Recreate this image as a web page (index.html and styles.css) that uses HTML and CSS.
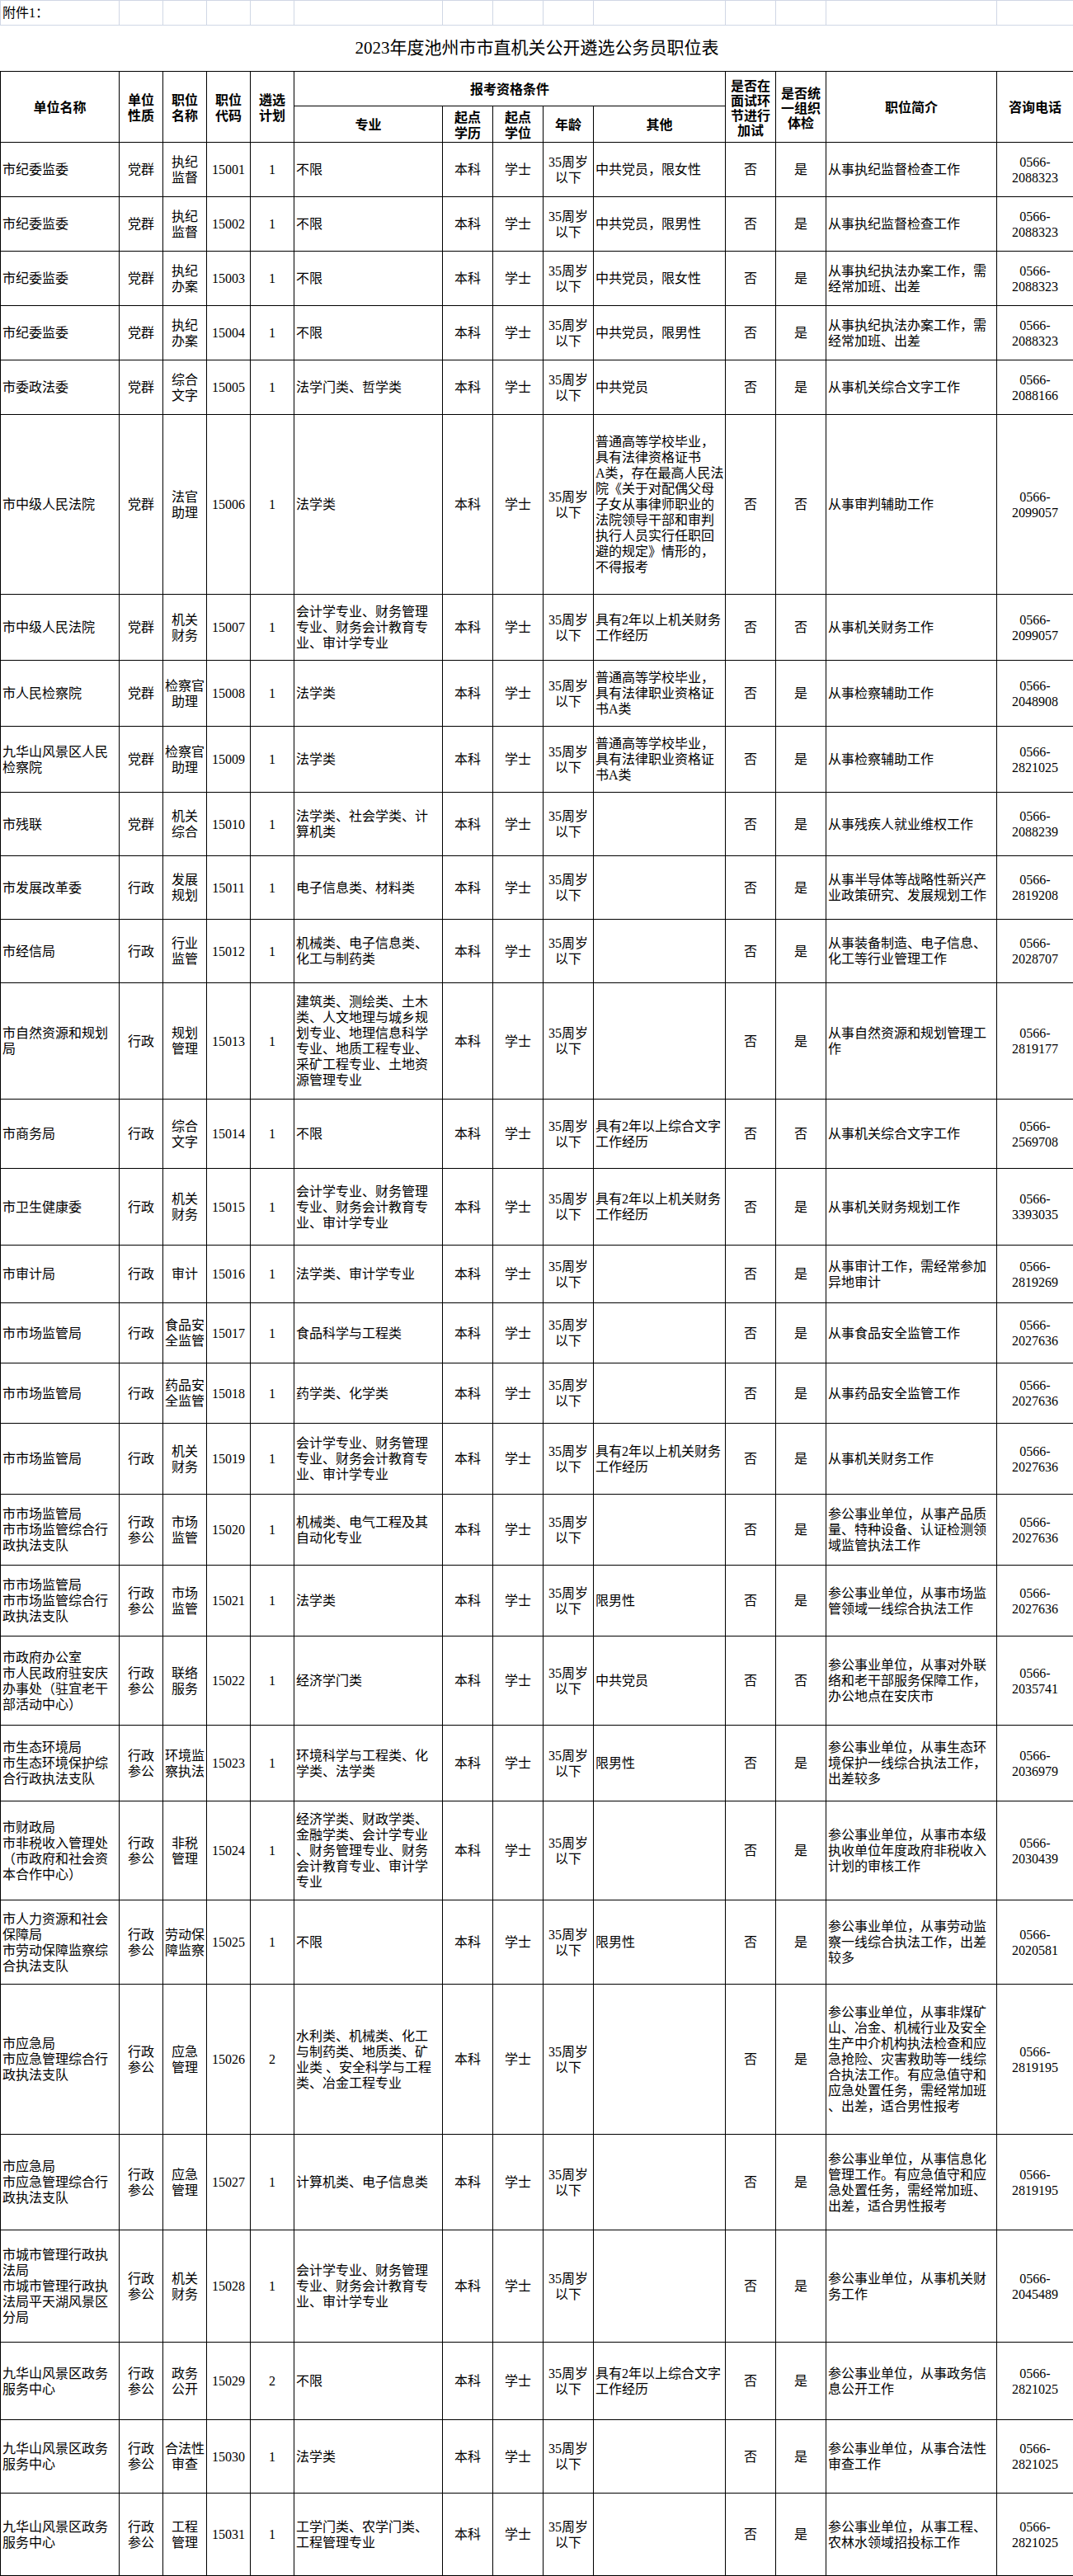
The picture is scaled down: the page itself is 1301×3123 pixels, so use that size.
FILE: index.html
```html
<!DOCTYPE html>
<html lang="zh-CN">
<head>
<meta charset="utf-8">
<title>2023年度池州市市直机关公开遴选公务员职位表</title>
<link rel="stylesheet" href="styles.css">
</head>
<body>
<table class="sheet">
<colgroup>
<col class="c-unit"><col class="c-n"><col class="c-n"><col class="c-n"><col class="c-n">
<col class="c-major"><col class="c-m"><col class="c-m"><col class="c-m"><col class="c-other">
<col class="c-m"><col class="c-m"><col class="c-desc"><col class="c-tel">
</colgroup>
<tbody>
<tr class="h30">
<td class="grid l">附件1：</td><td class="grid"></td><td class="grid"></td><td class="grid"></td><td class="grid"></td><td class="grid"></td><td class="grid"></td><td class="grid"></td><td class="grid"></td><td class="grid"></td><td class="grid"></td><td class="grid"></td><td class="grid"></td><td class="grid"></td>
</tr>
<tr class="h56"><td class="title" colspan="14">2023年度池州市市直机关公开遴选公务员职位表</td></tr>
<tr class="h42">
<td class="hd" rowspan="2">单位名称</td>
<td class="hd" rowspan="2">单位<br>性质</td>
<td class="hd" rowspan="2">职位<br>名称</td>
<td class="hd" rowspan="2">职位<br>代码</td>
<td class="hd" rowspan="2">遴选<br>计划</td>
<td class="hd" colspan="5">报考资格条件</td>
<td class="hd tight" rowspan="2">是否在<br>面试环<br>节进行<br>加试</td>
<td class="hd tight" rowspan="2">是否统<br>一组织<br>体检</td>
<td class="hd" rowspan="2">职位简介</td>
<td class="hd" rowspan="2">咨询电话</td>
</tr>
<tr class="h44">
<td class="hd">专业</td>
<td class="hd">起点<br>学历</td>
<td class="hd">起点<br>学位</td>
<td class="hd">年龄</td>
<td class="hd">其他</td>
</tr>

<tr class="h66"><td class="l">市纪委监委</td><td>党群</td><td>执纪<br>监督</td><td>15001</td><td>1</td><td class="l">不限</td><td>本科</td><td>学士</td><td>35周岁<br>以下</td><td class="l">中共党员，限女性</td><td>否</td><td>是</td><td class="l">从事执纪监督检查工作</td><td>0566-<br>2088323</td></tr>
<tr class="h66"><td class="l">市纪委监委</td><td>党群</td><td>执纪<br>监督</td><td>15002</td><td>1</td><td class="l">不限</td><td>本科</td><td>学士</td><td>35周岁<br>以下</td><td class="l">中共党员，限男性</td><td>否</td><td>是</td><td class="l">从事执纪监督检查工作</td><td>0566-<br>2088323</td></tr>
<tr class="h66"><td class="l">市纪委监委</td><td>党群</td><td>执纪<br>办案</td><td>15003</td><td>1</td><td class="l">不限</td><td>本科</td><td>学士</td><td>35周岁<br>以下</td><td class="l">中共党员，限女性</td><td>否</td><td>是</td><td class="l">从事执纪执法办案工作，需<br>经常加班、出差</td><td>0566-<br>2088323</td></tr>
<tr class="h66"><td class="l">市纪委监委</td><td>党群</td><td>执纪<br>办案</td><td>15004</td><td>1</td><td class="l">不限</td><td>本科</td><td>学士</td><td>35周岁<br>以下</td><td class="l">中共党员，限男性</td><td>否</td><td>是</td><td class="l">从事执纪执法办案工作，需<br>经常加班、出差</td><td>0566-<br>2088323</td></tr>
<tr class="h66"><td class="l">市委政法委</td><td>党群</td><td>综合<br>文字</td><td>15005</td><td>1</td><td class="l">法学门类、哲学类</td><td>本科</td><td>学士</td><td>35周岁<br>以下</td><td class="l">中共党员</td><td>否</td><td>是</td><td class="l">从事机关综合文字工作</td><td>0566-<br>2088166</td></tr>
<tr class="h218"><td class="l">市中级人民法院</td><td>党群</td><td>法官<br>助理</td><td>15006</td><td>1</td><td class="l">法学类</td><td>本科</td><td>学士</td><td>35周岁<br>以下</td><td class="l">普通高等学校毕业，<br>具有法律资格证书<br>A类，存在最高人民法<br>院《关于对配偶父母<br>子女从事律师职业的<br>法院领导干部和审判<br>执行人员实行任职回<br>避的规定》情形的，<br>不得报考</td><td>否</td><td>否</td><td class="l">从事审判辅助工作</td><td>0566-<br>2099057</td></tr>
<tr class="h80"><td class="l">市中级人民法院</td><td>党群</td><td>机关<br>财务</td><td>15007</td><td>1</td><td class="l">会计学专业、财务管理<br>专业、财务会计教育专<br>业、审计学专业</td><td>本科</td><td>学士</td><td>35周岁<br>以下</td><td class="l">具有2年以上机关财务<br>工作经历</td><td>否</td><td>否</td><td class="l">从事机关财务工作</td><td>0566-<br>2099057</td></tr>
<tr class="h80"><td class="l">市人民检察院</td><td>党群</td><td>检察官<br>助理</td><td>15008</td><td>1</td><td class="l">法学类</td><td>本科</td><td>学士</td><td>35周岁<br>以下</td><td class="l">普通高等学校毕业，<br>具有法律职业资格证<br>书A类</td><td>否</td><td>是</td><td class="l">从事检察辅助工作</td><td>0566-<br>2048908</td></tr>
<tr class="h80"><td class="l">九华山风景区人民<br>检察院</td><td>党群</td><td>检察官<br>助理</td><td>15009</td><td>1</td><td class="l">法学类</td><td>本科</td><td>学士</td><td>35周岁<br>以下</td><td class="l">普通高等学校毕业，<br>具有法律职业资格证<br>书A类</td><td>否</td><td>是</td><td class="l">从事检察辅助工作</td><td>0566-<br>2821025</td></tr>
<tr class="h77"><td class="l">市残联</td><td>党群</td><td>机关<br>综合</td><td>15010</td><td>1</td><td class="l">法学类、社会学类、计<br>算机类</td><td>本科</td><td>学士</td><td>35周岁<br>以下</td><td class="l"></td><td>否</td><td>是</td><td class="l">从事残疾人就业维权工作</td><td>0566-<br>2088239</td></tr>
<tr class="h77"><td class="l">市发展改革委</td><td>行政</td><td>发展<br>规划</td><td>15011</td><td>1</td><td class="l">电子信息类、材料类</td><td>本科</td><td>学士</td><td>35周岁<br>以下</td><td class="l"></td><td>否</td><td>是</td><td class="l">从事半导体等战略性新兴产<br>业政策研究、发展规划工作</td><td>0566-<br>2819208</td></tr>
<tr class="h77"><td class="l">市经信局</td><td>行政</td><td>行业<br>监管</td><td>15012</td><td>1</td><td class="l">机械类、电子信息类、<br>化工与制药类</td><td>本科</td><td>学士</td><td>35周岁<br>以下</td><td class="l"></td><td>否</td><td>是</td><td class="l">从事装备制造、电子信息、<br>化工等行业管理工作</td><td>0566-<br>2028707</td></tr>
<tr class="h141"><td class="l">市自然资源和规划<br>局</td><td>行政</td><td>规划<br>管理</td><td>15013</td><td>1</td><td class="l">建筑类、测绘类、土木<br>类、人文地理与城乡规<br>划专业、地理信息科学<br>专业、地质工程专业、<br>采矿工程专业、土地资<br>源管理专业</td><td>本科</td><td>学士</td><td>35周岁<br>以下</td><td class="l"></td><td>否</td><td>是</td><td class="l">从事自然资源和规划管理工<br>作</td><td>0566-<br>2819177</td></tr>
<tr class="h84"><td class="l">市商务局</td><td>行政</td><td>综合<br>文字</td><td>15014</td><td>1</td><td class="l">不限</td><td>本科</td><td>学士</td><td>35周岁<br>以下</td><td class="l">具有2年以上综合文字<br>工作经历</td><td>否</td><td>否</td><td class="l">从事机关综合文字工作</td><td>0566-<br>2569708</td></tr>
<tr class="h93"><td class="l">市卫生健康委</td><td>行政</td><td>机关<br>财务</td><td>15015</td><td>1</td><td class="l">会计学专业、财务管理<br>专业、财务会计教育专<br>业、审计学专业</td><td>本科</td><td>学士</td><td>35周岁<br>以下</td><td class="l">具有2年以上机关财务<br>工作经历</td><td>否</td><td>是</td><td class="l">从事机关财务规划工作</td><td>0566-<br>3393035</td></tr>
<tr class="h70"><td class="l">市审计局</td><td>行政</td><td>审计</td><td>15016</td><td>1</td><td class="l">法学类、审计学专业</td><td>本科</td><td>学士</td><td>35周岁<br>以下</td><td class="l"></td><td>否</td><td>是</td><td class="l">从事审计工作，需经常参加<br>异地审计</td><td>0566-<br>2819269</td></tr>
<tr class="h73"><td class="l">市市场监管局</td><td>行政</td><td>食品安<br>全监管</td><td>15017</td><td>1</td><td class="l">食品科学与工程类</td><td>本科</td><td>学士</td><td>35周岁<br>以下</td><td class="l"></td><td>否</td><td>是</td><td class="l">从事食品安全监管工作</td><td>0566-<br>2027636</td></tr>
<tr class="h73"><td class="l">市市场监管局</td><td>行政</td><td>药品安<br>全监管</td><td>15018</td><td>1</td><td class="l">药学类、化学类</td><td>本科</td><td>学士</td><td>35周岁<br>以下</td><td class="l"></td><td>否</td><td>是</td><td class="l">从事药品安全监管工作</td><td>0566-<br>2027636</td></tr>
<tr class="h86"><td class="l">市市场监管局</td><td>行政</td><td>机关<br>财务</td><td>15019</td><td>1</td><td class="l">会计学专业、财务管理<br>专业、财务会计教育专<br>业、审计学专业</td><td>本科</td><td>学士</td><td>35周岁<br>以下</td><td class="l">具有2年以上机关财务<br>工作经历</td><td>否</td><td>是</td><td class="l">从事机关财务工作</td><td>0566-<br>2027636</td></tr>
<tr class="h86"><td class="l">市市场监管局<br>市市场监管综合行<br>政执法支队</td><td>行政<br>参公</td><td>市场<br>监管</td><td>15020</td><td>1</td><td class="l">机械类、电气工程及其<br>自动化专业</td><td>本科</td><td>学士</td><td>35周岁<br>以下</td><td class="l"></td><td>否</td><td>是</td><td class="l">参公事业单位，从事产品质<br>量、特种设备、认证检测领<br>域监管执法工作</td><td>0566-<br>2027636</td></tr>
<tr class="h86"><td class="l">市市场监管局<br>市市场监管综合行<br>政执法支队</td><td>行政<br>参公</td><td>市场<br>监管</td><td>15021</td><td>1</td><td class="l">法学类</td><td>本科</td><td>学士</td><td>35周岁<br>以下</td><td class="l">限男性</td><td>否</td><td>是</td><td class="l">参公事业单位，从事市场监<br>管领域一线综合执法工作</td><td>0566-<br>2027636</td></tr>
<tr class="h108"><td class="l">市政府办公室<br>市人民政府驻安庆<br>办事处（驻宜老干<br>部活动中心）</td><td>行政<br>参公</td><td>联络<br>服务</td><td>15022</td><td>1</td><td class="l">经济学门类</td><td>本科</td><td>学士</td><td>35周岁<br>以下</td><td class="l">中共党员</td><td>否</td><td>否</td><td class="l">参公事业单位，从事对外联<br>络和老干部服务保障工作，<br>办公地点在安庆市</td><td>0566-<br>2035741</td></tr>
<tr class="h92"><td class="l">市生态环境局<br>市生态环境保护综<br>合行政执法支队</td><td>行政<br>参公</td><td>环境监<br>察执法</td><td>15023</td><td>1</td><td class="l">环境科学与工程类、化<br>学类、法学类</td><td>本科</td><td>学士</td><td>35周岁<br>以下</td><td class="l">限男性</td><td>否</td><td>是</td><td class="l">参公事业单位，从事生态环<br>境保护一线综合执法工作，<br>出差较多</td><td>0566-<br>2036979</td></tr>
<tr class="h120"><td class="l">市财政局<br>市非税收入管理处<br>（市政府和社会资<br>本合作中心）</td><td>行政<br>参公</td><td>非税<br>管理</td><td>15024</td><td>1</td><td class="l">经济学类、财政学类、<br>金融学类、会计学专业<br>、财务管理专业、财务<br>会计教育专业、审计学<br>专业</td><td>本科</td><td>学士</td><td>35周岁<br>以下</td><td class="l"></td><td>否</td><td>是</td><td class="l">参公事业单位，从事市本级<br>执收单位年度政府非税收入<br>计划的审核工作</td><td>0566-<br>2030439</td></tr>
<tr class="h102"><td class="l">市人力资源和社会<br>保障局<br>市劳动保障监察综<br>合执法支队</td><td>行政<br>参公</td><td>劳动保<br>障监察</td><td>15025</td><td>1</td><td class="l">不限</td><td>本科</td><td>学士</td><td>35周岁<br>以下</td><td class="l">限男性</td><td>否</td><td>是</td><td class="l">参公事业单位，从事劳动监<br>察一线综合执法工作，出差<br>较多</td><td>0566-<br>2020581</td></tr>
<tr class="h182"><td class="l">市应急局<br>市应急管理综合行<br>政执法支队</td><td>行政<br>参公</td><td>应急<br>管理</td><td>15026</td><td>2</td><td class="l">水利类、机械类、化工<br>与制药类、地质类、矿<br>业类 、安全科学与工程<br>类、冶金工程专业</td><td>本科</td><td>学士</td><td>35周岁<br>以下</td><td class="l"></td><td>否</td><td>是</td><td class="l">参公事业单位，从事非煤矿<br>山、冶金、机械行业及安全<br>生产中介机构执法检查和应<br>急抢险、灾害救助等一线综<br>合执法工作。有应急值守和<br>应急处置任务，需经常加班<br>、出差，适合男性报考</td><td>0566-<br>2819195</td></tr>
<tr class="h116"><td class="l">市应急局<br>市应急管理综合行<br>政执法支队</td><td>行政<br>参公</td><td>应急<br>管理</td><td>15027</td><td>1</td><td class="l">计算机类、电子信息类</td><td>本科</td><td>学士</td><td>35周岁<br>以下</td><td class="l"></td><td>否</td><td>是</td><td class="l">参公事业单位，从事信息化<br>管理工作。有应急值守和应<br>急处置任务，需经常加班、<br>出差，适合男性报考</td><td>0566-<br>2819195</td></tr>
<tr class="h136"><td class="l">市城市管理行政执<br>法局<br>市城市管理行政执<br>法局平天湖风景区<br>分局</td><td>行政<br>参公</td><td>机关<br>财务</td><td>15028</td><td>1</td><td class="l">会计学专业、财务管理<br>专业、财务会计教育专<br>业、审计学专业</td><td>本科</td><td>学士</td><td>35周岁<br>以下</td><td class="l"></td><td>否</td><td>是</td><td class="l">参公事业单位，从事机关财<br>务工作</td><td>0566-<br>2045489</td></tr>
<tr class="h94"><td class="l">九华山风景区政务<br>服务中心</td><td>行政<br>参公</td><td>政务<br>公开</td><td>15029</td><td>2</td><td class="l">不限</td><td>本科</td><td>学士</td><td>35周岁<br>以下</td><td class="l">具有2年以上综合文字<br>工作经历</td><td>否</td><td>是</td><td class="l">参公事业单位，从事政务信<br>息公开工作</td><td>0566-<br>2821025</td></tr>
<tr class="h89"><td class="l">九华山风景区政务<br>服务中心</td><td>行政<br>参公</td><td>合法性<br>审查</td><td>15030</td><td>1</td><td class="l">法学类</td><td>本科</td><td>学士</td><td>35周岁<br>以下</td><td class="l"></td><td>否</td><td>是</td><td class="l">参公事业单位，从事合法性<br>审查工作</td><td>0566-<br>2821025</td></tr>
<tr class="h100"><td class="l">九华山风景区政务<br>服务中心</td><td>行政<br>参公</td><td>工程<br>管理</td><td>15031</td><td>1</td><td class="l">工学门类、农学门类、<br>工程管理专业</td><td>本科</td><td>学士</td><td>35周岁<br>以下</td><td class="l"></td><td>否</td><td>是</td><td class="l">参公事业单位，从事工程、<br>农林水领域招投标工作</td><td>0566-<br>2821025</td></tr>
</tbody>
</table>
</body>
</html>
```

FILE: styles.css
```css
html, body {
  margin: 0;
  padding: 0;
  background: #ffffff;
}

body {
  font-family: "Liberation Serif", "Noto Sans CJK SC", serif;
  font-size: 16px;
  color: #000000;
}

.sheet {
  border-collapse: collapse;
  table-layout: fixed;
  width: 1301px;
}

.c-unit { width: 144px; }
.c-n { width: 53px; }
.c-major { width: 180px; }
.c-m { width: 61px; }
.c-other { width: 160px; }
.c-desc { width: 207px; }
.c-tel { width: 93px; }

.sheet td {
  border: 1px solid #000000;
  padding: 0 2px;
  text-align: center;
  vertical-align: middle;
  line-height: 19px;
  white-space: nowrap;
}

.sheet td.l {
  text-align: left;
}

.sheet td.grid {
  border: 1px solid #d0d7e5;
}

.sheet td.title {
  border-top: 1px solid #d0d7e5;
  border-left: none;
  border-right: none;
  border-bottom: 1px solid #000000;
  font-size: 21px;
  font-weight: 400;
}

.sheet td.hd {
  font-family: "Noto Sans CJK SC", sans-serif;
  font-weight: 700;
  line-height: 19px;
}

.sheet td.tight {
  line-height: 18px;
}

.h30 { height: 30px; }
.h42 { height: 42px; }
.h44 { height: 44px; }
.h56 { height: 56px; }
.h66 { height: 66px; }
.h70 { height: 70px; }
.h73 { height: 73px; }
.h77 { height: 77px; }
.h80 { height: 80px; }
.h84 { height: 84px; }
.h86 { height: 86px; }
.h89 { height: 89px; }
.h92 { height: 92px; }
.h93 { height: 93px; }
.h94 { height: 94px; }
.h100 { height: 100px; }
.h102 { height: 102px; }
.h108 { height: 108px; }
.h116 { height: 116px; }
.h120 { height: 120px; }
.h136 { height: 136px; }
.h141 { height: 141px; }
.h182 { height: 182px; }
.h218 { height: 218px; }
```
